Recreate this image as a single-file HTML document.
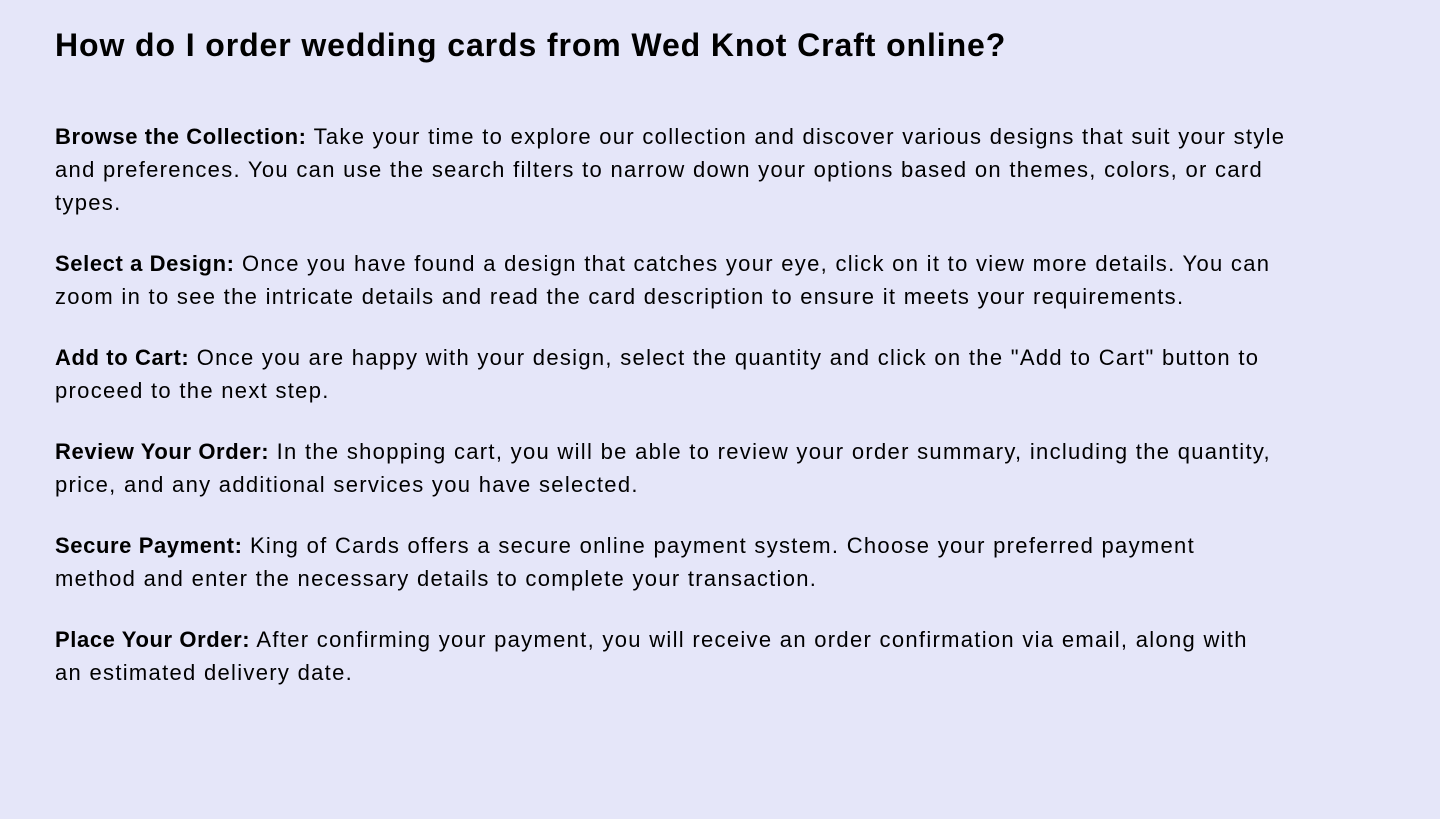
<!DOCTYPE html>
<html><head><meta charset="utf-8"><style>
html,body{margin:0;padding:0;width:1440px;height:819px;background:#e5e6f9;overflow:hidden}
body{font-family:"Liberation Sans",Arial,sans-serif;color:#000}
h1{position:absolute;left:55px;top:24px;margin:0;font-size:32px;font-weight:bold;line-height:42px;letter-spacing:0.9px}
.p{position:absolute;left:55px;font-size:22px;line-height:33px;letter-spacing:1.3px;white-space:nowrap}
b{font-weight:bold;letter-spacing:0.6px}
</style></head><body>
<h1>How do I order wedding cards from Wed Knot Craft online?</h1>
<div class="p" style="top:120px"><b>Browse the Collection:</b> Take your time to explore our collection and discover various designs that suit your style<br>and preferences. You can use the search filters to narrow down your options based on themes, colors, or card<br>types.</div>
<div class="p" style="top:247px"><b>Select a Design:</b> Once you have found a design that catches your eye, click on it to view more details. You can<br>zoom in to see the intricate details and read the card description to ensure it meets your requirements.</div>
<div class="p" style="top:341px"><b>Add to Cart:</b> Once you are happy with your design, select the quantity and click on the "Add to Cart" button to<br>proceed to the next step.</div>
<div class="p" style="top:435px"><b>Review Your Order:</b> In the shopping cart, you will be able to review your order summary, including the quantity,<br>price, and any additional services you have selected.</div>
<div class="p" style="top:529px"><b>Secure Payment:</b> King of Cards offers a secure online payment system. Choose your preferred payment<br>method and enter the necessary details to complete your transaction.</div>
<div class="p" style="top:623px"><b>Place Your Order:</b> After confirming your payment, you will receive an order confirmation via email, along with<br>an estimated delivery date.</div>
</body></html>
